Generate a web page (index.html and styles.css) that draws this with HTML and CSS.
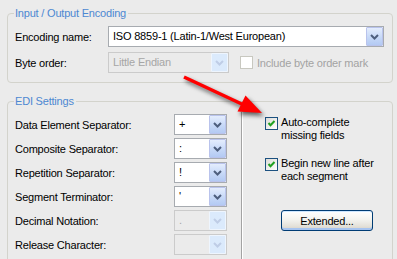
FILE: index.html
```html
<!DOCTYPE html>
<html>
<head>
<meta charset="utf-8">
<link rel="stylesheet" href="styles.css">
</head>
<body>
<div class="page">
  <fieldset class="group g1">
    <legend>Input / Output Encoding</legend>
    <div class="row">
      <span class="lbl w93">Encoding name:</span>
      <div class="combo wide"><span class="val">ISO 8859-1 (Latin-1/West European)</span><span class="dd"><svg width="9" height="6" viewBox="0 0 9 6"><path d="M1 1l3.5 3.5L8 1" /></svg></span></div>
    </div>
    <div class="row r2">
      <span class="lbl w93">Byte order:</span>
      <div class="combo mid dis"><span class="val">Little Endian</span><span class="dd"><svg width="9" height="6" viewBox="0 0 9 6"><path d="M1 1l3.5 3.5L8 1" /></svg></span></div>
      <label class="chk dis"><span class="box"></span>Include byte order mark</label>
    </div>
  </fieldset>

  <fieldset class="group g2">
    <legend>EDI Settings</legend>
    <div class="edi">
      <div class="fields">
        <span class="lbl">Data Element Separator:</span>
        <div class="combo"><span class="val">+</span><span class="dd"><svg width="9" height="6" viewBox="0 0 9 6"><path d="M1 1l3.5 3.5L8 1" /></svg></span></div>
        <span class="lbl">Composite Separator:</span>
        <div class="combo"><span class="val">:</span><span class="dd"><svg width="9" height="6" viewBox="0 0 9 6"><path d="M1 1l3.5 3.5L8 1" /></svg></span></div>
        <span class="lbl">Repetition Separator:</span>
        <div class="combo"><span class="val">!</span><span class="dd"><svg width="9" height="6" viewBox="0 0 9 6"><path d="M1 1l3.5 3.5L8 1" /></svg></span></div>
        <span class="lbl">Segment Terminator:</span>
        <div class="combo"><span class="val">'</span><span class="dd"><svg width="9" height="6" viewBox="0 0 9 6"><path d="M1 1l3.5 3.5L8 1" /></svg></span></div>
        <span class="lbl">Decimal Notation:</span>
        <div class="combo dis"><span class="val">.</span><span class="dd"><svg width="9" height="6" viewBox="0 0 9 6"><path d="M1 1l3.5 3.5L8 1" /></svg></span></div>
        <span class="lbl">Release Character:</span>
        <div class="combo dis"><span class="val"></span><span class="dd"><svg width="9" height="6" viewBox="0 0 9 6"><path d="M1 1l3.5 3.5L8 1" /></svg></span></div>
      </div>
      <div class="sep"></div>
      <div class="opts">
        <label class="opt"><span class="box"><svg width="11" height="11" viewBox="0 0 11 11"><path d="M2.5 5l2 2.2L8.5 3" /></svg></span><span class="txt">Auto-complete<br>missing fields</span></label>
        <label class="opt o2"><span class="box"><svg width="11" height="11" viewBox="0 0 11 11"><path d="M2.5 5l2 2.2L8.5 3" /></svg></span><span class="txt">Begin new line after<br>each segment</span></label>
        <button class="btn">Extended...</button>
      </div>
    </div>
  </fieldset>

  <svg class="arrow" width="397" height="259" viewBox="0 0 397 259">
    <line x1="184" y1="77" x2="246" y2="106" stroke="#ff0000" stroke-width="3.5" />
    <polygon points="262,113 237.5,111.5 245.5,95.5" fill="#ff0000" />
  </svg>
</div>
</body>
</html>
```

FILE: styles.css
```css
html, body {
  margin: 0;
  height: 100%;
  overflow: hidden;
}
body {
  background: #ebebeb;
  font-family: "Liberation Sans", Arial, sans-serif;
  font-size: 11px;
  letter-spacing: -0.2px;
  color: #000;
}
.page {
  position: relative;
  height: 259px;
  overflow: hidden;
  box-sizing: border-box;
  padding: 6px 4px 0 7px;
}
.group {
  margin: 0;
  min-width: 0;
  border: 1px solid #d3d3cc;
  border-radius: 4px;
  padding: 6px 7px 9px 7px;
}
.g2 {
  margin-top: 11px;
}
legend {
  color: #4d88d2;
  padding: 0 2px 0 1px;
  margin-left: -1px;
  line-height: 14px;
  font-size: 11px;
}
.row {
  display: flex;
  align-items: center;
  height: 21px;
}
.r2 {
  margin-top: 5px;
}
.lbl {
  white-space: nowrap;
}
.w93 {
  width: 93px;
  flex: none;
}
.combo {
  display: flex;
  height: 21px;
  box-sizing: border-box;
  border: 1px solid #a7abb0;
  background: #fff;
}
.wide { width: 276px; }
.mid { width: 121px; }
.val {
  flex: 1;
  padding-left: 4px;
  line-height: 19px;
  white-space: nowrap;
  overflow: hidden;
}
.dd {
  width: 17px;
  flex: none;
  box-sizing: border-box;
  border: 1px solid #b9c3ec;
  border-radius: 1px;
  background: linear-gradient(#e4edfd, #c4d7f7 60%, #b3caf3);
  display: flex;
  align-items: center;
  justify-content: center;
}
.dd path {
  fill: none;
  stroke: #4e5f7e;
  stroke-width: 2;
}
.combo.dis {
  background: transparent;
  border-color: #cbcbcb;
  color: #a6a6a6;
}
.combo.dis .dd {
  background: #dbeafc;
  border-color: #eef5fe;
}
.combo.dis .dd path {
  stroke: #bfcde6;
}
.chk {
  display: flex;
  align-items: center;
  gap: 4px;
  margin-left: 11px;
}
.chk.dis { color: #a3a3a3; }
.box {
  width: 13px;
  height: 13px;
  box-sizing: border-box;
  flex: none;
  border: 1px solid #1c5180;
  background: linear-gradient(135deg, #dcdcd7, #fff);
  display: flex;
}
.chk.dis .box {
  border-color: #c8c8c0;
  background: #fff;
}
.box path {
  fill: none;
  stroke: #21a121;
  stroke-width: 2;
}
.edi {
  display: flex;
}
.fields {
  display: grid;
  grid-template-columns: 159px 53px;
  grid-auto-rows: 21px;
  row-gap: 3px;
  align-items: center;
}
.sep {
  width: 0;
  border-left: 1px solid #a3a3a3;
  border-right: 1px solid #fff;
  margin: -2px 0 -20px 14px;
}
.opts {
  display: flex;
  flex-direction: column;
  align-items: flex-start;
  padding: 2px 0 0 22px;
}
.opt {
  display: flex;
  align-items: flex-start;
  gap: 3px;
  line-height: 13px;
}
.opt .box { margin-top: 1px; }
.o2 { margin-top: 15px; }
.btn {
  margin: 27px 0 0 16px;
  width: 92px;
  height: 21px;
  padding: 0;
  font: inherit;
  letter-spacing: inherit;
  color: #000;
  border: 1px solid #003c74;
  border-radius: 3px;
  background: linear-gradient(#ffffff, #f3f3ef 45%, #e3e1d9 80%, #d6d0c5);
  box-shadow: inset 0 -2px 0 #a6c4f0, inset 0 1px 0 #cee7ff;
}
.arrow {
  position: absolute;
  left: 0;
  top: 0;
  pointer-events: none;
  filter: drop-shadow(2px 3px 2px rgba(0, 0, 0, 0.6));
}
```
